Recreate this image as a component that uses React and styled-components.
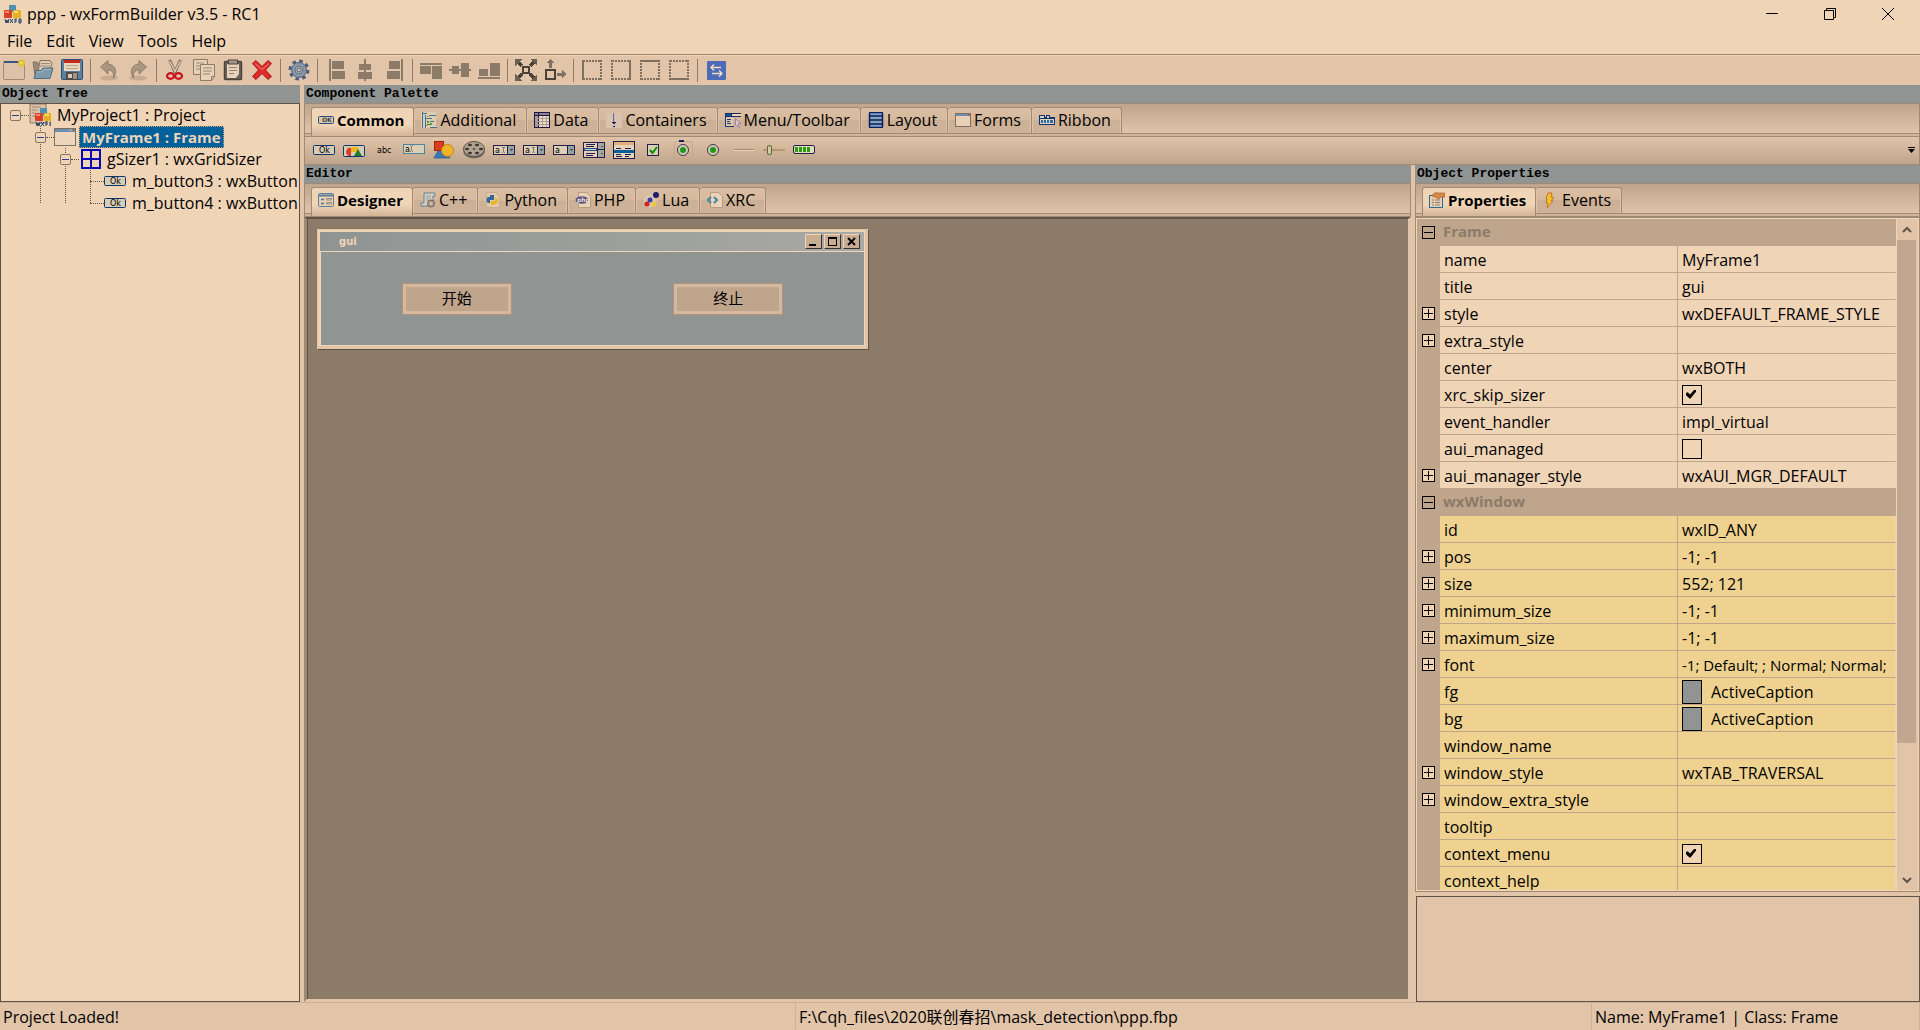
import React, { useState } from "react";
import styled, { createGlobalStyle, css } from "styled-components";

const c = {
  light: "#f0d4b6",
  face: "#e2c4a8",
  shade: "#bea58c",
  line: "#a08a76",
  dark: "#5f5347",
  caption: "#909593",
  canvas: "#8c7b69",
  yellow: "#efd290",
  select: "#00609a",
  glyph: "#8c7b69",
};

const GlobalStyle = createGlobalStyle`
  * { box-sizing: border-box; }
  body {
    margin: 0;
    background: ${c.face};
    color: #000;
    font-family: "Open Sans", "Noto Sans CJK SC", sans-serif;
    font-size: 16px;
    line-height: 22px;
    overflow: hidden;
  }
  button, input { font: inherit; color: inherit; }
  button { border: 0; padding: 0; margin: 0; background: none; display: block; }
  svg { display: block; flex: none; }
`;

/* ---------- shell ---------- */

const Window = styled.div`
  display: flex;
  flex-direction: column;
  height: 100vh;
`;

const TitleBar = styled.header`
  display: flex;
  align-items: center;
  height: 28px;
  padding: 0 3px 0 2px;
  background: ${c.light};
`;

const TitleText = styled.h1`
  flex: 1;
  margin: 0 0 0 5px;
  font-size: 16px;
  font-weight: 400;
`;

const WindowControl = styled.button`
  display: flex;
  align-items: center;
  justify-content: center;
  width: 58px;
  height: 28px;
`;

const MenuBar = styled.nav`
  display: flex;
  height: 26px;
  gap: 14px;
  padding: 0 7px 1px;
  background: ${c.light};
`;

const ToolBar = styled.div`
  display: flex;
  align-items: center;
  gap: 7px;
  height: 31px;
  padding-left: 3px;
  border-top: 1px solid ${c.line};
  box-shadow: inset 0 1px ${c.light};
`;

const Separator = styled.span`
  width: 1px;
  height: 23px;
  background: ${c.canvas};
`;

const Main = styled.main`
  display: grid;
  grid-template-columns: 300px minmax(0, 1fr);
  column-gap: 4px;
  flex: 1;
  min-height: 0;
`;

const Pane = styled.section`
  display: flex;
  flex-direction: column;
  min-width: 0;
  min-height: 0;
`;

const Workspace = styled.div`
  display: grid;
  grid-template-columns: minmax(0, 1fr) 505px;
  column-gap: 4px;
  flex: 1;
  min-height: 0;
`;

const Caption = styled.h2`
  flex: none;
  height: 18px;
  margin: 0;
  padding-left: 2px;
  background: ${c.caption};
  font: 700 13px/18px "Liberation Mono", monospace;
`;

const StatusBar = styled.footer`
  display: grid;
  grid-template-columns: minmax(0, 1fr) minmax(0, 1fr) 328px;
  height: 28px;
  border-top: 1px solid #cbb096;
`;

const StatusCell = styled.span`
  padding: 3px 0 0 3px;
  border-right: 1px solid #cbb096;
`;

/* ---------- object tree ---------- */

const TreeBox = styled.div`
  flex: 1;
  border: 1px solid ${c.dark};
  background: ${c.light};
`;

const TreeList = styled.ul`
  position: relative;
  margin: 0;
  padding: 0 0 0 ${(p) => (p.$root ? 9 : 25)}px;
  list-style: none;
  &::before {
    content: "";
    display: ${(p) => (p.$root ? "none" : "block")};
    position: absolute;
    left: 30px;
    top: 0;
    bottom: 11px;
    border-left: 1px dotted ${c.dark};
  }
`;

const TreeRow = styled.div`
  display: flex;
  align-items: center;
  height: 22px;
`;

const Expander = styled.button`
  position: relative;
  flex: none;
  width: 11px;
  height: 11px;
  border: 1px solid #857565;
  border-radius: 2px;
  background: ${c.light};
  &::before {
    content: "";
    display: block;
    width: 7px;
    height: 1px;
    margin: 0 auto;
    background: #2a3f96;
  }
`;

const LeafGap = styled.span`
  flex: none;
  width: 5px;
`;

const Dots = styled.span`
  flex: none;
  width: ${(p) => (p.$leaf ? 14 : 8)}px;
  border-top: 1px dotted ${c.dark};
`;

const TreeLabel = styled.span`
  margin-left: 3px;
  padding: 0 2px;
  border: 1px solid transparent;
  line-height: 20px;
  white-space: nowrap;
  ${(p) =>
    p.$selected &&
    css`
      border: 1px dotted #e0a070;
      background: ${c.select};
      color: ${c.light};
      font-weight: 700;
      font-size: 15px;
    `}
`;

/* ---------- notebooks ---------- */

const TabStrip = styled.div`
  display: flex;
  flex: none;
  height: 34px;
  padding: 3px 6px 0;
  border: solid ${c.line};
  border-width: 1px 1px 1px 1px;
  background: linear-gradient(
    ${c.shade} 0,
    ${c.face} 29px,
    ${c.line} 29px,
    ${c.line} 30px,
    #d2b598 30px
  );
`;

const Tab = styled.button`
  display: flex;
  align-items: center;
  gap: 3px;
  height: 26px;
  padding: 0 10px 1px 7px;
  border: solid ${c.line};
  border-width: 1px 1px 0 0;
  border-radius: 3px 3px 0 0;
  background: linear-gradient(#dbbfa3 0, #d6b99d 50%, #ccb095 50%, #d0b499 100%);
  box-shadow: inset 1px 1px #dec2a6, inset -1px 0 #dec2a6;
  white-space: nowrap;
  ${(p) =>
    p.$active &&
    css`
      height: 29px;
      padding: 0 9px 4px 6px;
      border-width: 1px 1px 0 1px;
      background: linear-gradient(${c.light} 60%, #d2b598);
      box-shadow: none;
      font-weight: 700;
      font-size: 15px;
    `}
`;

const PaletteBar = styled.div`
  display: flex;
  align-items: center;
  gap: 8px;
  height: 28px;
  padding: 0 4px 1px 8px;
  border: solid ${c.line};
  border-width: 0 1px 1px;
  background: linear-gradient(${c.face}, ${c.shade});
`;

const Overflow = styled.button`
  margin-left: auto;
`;

/* ---------- designer ---------- */

const Canvas = styled.div`
  flex: 1;
  min-height: 0;
  padding: 10px;
  border: solid;
  border-width: 2px 3px 3px 3px;
  border-color: ${c.dark} ${c.face} ${c.face} ${c.line};
  background: ${c.canvas};
  box-shadow: inset 1px 0 ${c.dark};
`;

const FormFrame = styled.div`
  display: flex;
  flex-direction: column;
  padding: 2px 4px 4px 2px;
  border: 1px solid;
  border-color: ${c.face} ${c.dark} ${c.dark} ${c.face};
  background: ${c.light};
  box-shadow: inset -3px -3px ${c.face};
`;

const FormTitle = styled.div`
  display: flex;
  align-items: center;
  gap: 2px;
  height: 19px;
  padding: 0 4px 0 19px;
  background: linear-gradient(90deg, #8f9492, #a9a9a6);
  color: ${c.light};
  font: 700 10px/14px "DejaVu Sans", sans-serif;
`;

const FormName = styled.span`
  flex: 1;
`;

const FormControl = styled.button`
  display: flex;
  align-items: center;
  justify-content: center;
  width: 17px;
  height: 15px;
  border: 1px solid;
  border-color: ${c.light} #3a332c #3a332c ${c.light};
  background: #c9ad92;
`;

const FormBody = styled.div`
  display: grid;
  grid-template-columns: 1fr 1fr;
  place-items: center;
  flex: 1;
  margin: 1px 0 0 1px;
  background: ${c.caption};
`;

const FormButton = styled.button`
  width: 110px;
  height: 32px;
  padding-bottom: 2px;
  border: 1px solid #b0937a;
  background: ${c.shade};
  box-shadow: inset 0 0 0 3px #d6b99d;
  font: 15px/22px "Noto Sans CJK SC", sans-serif;
`;

/* ---------- property grid ---------- */

const GridFrame = styled.div`
  display: flex;
  flex: 1;
  min-height: 0;
  border: solid ${c.line};
  border-width: 1px 1px 1px 1px;
  box-shadow: inset 0 0 0 1px ${c.light};
  padding: 1px 3px 1px 1px;
`;

const GridClip = styled.div`
  flex: 1;
  min-width: 0;
  overflow: hidden;
  border-left: 1px solid ${c.shade};
`;

const GridTable = styled.table`
  width: 100%;
  table-layout: fixed;
  border-spacing: 0;
  background: ${c.shade};
`;

const GutterCol = styled.col`
  width: 22px;
`;
const NameCol = styled.col`
  width: 238px;
`;

const Gutter = styled.td`
  height: 27px;
  padding: 0 0 0 4px;
`;

const Category = styled.th`
  padding: 0 3px 3px;
  color: ${c.canvas};
  font-size: 15px;
  text-align: left;
`;

const cell = css`
  height: 27px;
  padding: 1px 0 0 4px;
  border: solid ${c.shade};
  border-width: 0 1px 1px 0;
  background: ${(p) => (p.$yellow ? c.yellow : c.light)};
  overflow: hidden;
  text-align: left;
  font-weight: 400;
  font-size: ${(p) => (p.$compact ? 15 : 16)}px;
  white-space: nowrap;
`;
const NameCell = styled.th`
  ${cell}
`;
const ValueCell = styled.td`
  ${cell}
  border-right-color: ${c.light};
`;

const ValueLine = styled.span`
  display: flex;
  align-items: center;
  gap: 9px;
`;

const Swatch = styled.span`
  width: 20px;
  height: 24px;
  border: 1px solid #000;
  background: ${c.caption};
`;

const Toggle = styled.button`
  display: flex;
  align-items: center;
  justify-content: center;
  width: 13px;
  height: 13px;
  border: 1px solid #000;
  background: ${(p) => (p.$open ? "transparent" : c.light)};
`;

const Check = styled.input`
  appearance: none;
  display: block;
  width: 20px;
  height: 20px;
  margin: 0;
  border: 1px solid #000;
  background: ${c.light};
  &:checked::after {
    content: "";
    display: block;
    width: 10px;
    height: 9px;
    margin: 4px 3px;
    background: #000;
    clip-path: polygon(0 40%, 18% 30%, 40% 55%, 85% 0, 100% 0, 100% 25%, 45% 100%, 35% 100%, 0 65%);
  }
`;

const ScrollBar = styled.div`
  display: flex;
  flex-direction: column;
  width: 20px;
  border-left: 1px solid ${c.light};
  background: ${c.face};
`;
const ScrollButton = styled.button`
  display: flex;
  align-items: center;
  justify-content: center;
  height: 21px;
`;
const ScrollTrack = styled.div`
  flex: 1;
`;
const ScrollThumb = styled.div`
  height: 80%;
  background: #c1a78f;
`;

const HelpBox = styled.div`
  flex: none;
  height: 106px;
  margin: 4px 0 0 1px;
  border: 1px solid ${c.dark};
`;

/* ---------- icons ---------- */

const Svg = ({ s = 22, children, crisp }) => (
  <svg width={s} height={s} viewBox={`0 0 ${s} ${s}`} fill="none" aria-hidden="true" shapeRendering={crisp ? "crispEdges" : undefined}>
    {children}
  </svg>
);

const Blocks = () => (
  <>
    <rect x="6" y="0" width="7" height="7" rx="1" fill="#4f8fb0" />
    <rect x="1" y="5" width="8" height="8" rx="1" fill="#d8402a" />
    <rect x="10" y="5" width="8" height="8" rx="1" fill="#e8b020" />
    <rect x="2" y="6" width="4" height="2" fill="#ee8a70" />
    <rect x="11" y="6" width="4" height="2" fill="#f8dc70" />
    <path d="M2 14l1 4 1-3 1 3 1-4M7 14l3 4m0-4l-3 4M12 18v-4h2M12 16h2M16 18v-4h2v4zM16 16h2" stroke="#1d3f6e" strokeWidth="1" />
  </>
);
const AppIcon = () => (
  <Svg s={20}>
    <g transform="translate(1 1)">
      <Blocks />
    </g>
  </Svg>
);
const ProjectIcon = () => (
  <Svg>
    <path d="M1 0h16v19H1z" fill="#dcc2a6" stroke="#8c7b69" />
    <path d="M3 3h9M3 6h5M3 9h3M3 12h3" stroke="#a08a76" />
    <g transform="translate(5 4)">
      <Blocks />
    </g>
  </Svg>
);
const FrameIcon = () => (
  <Svg>
    <rect x=".5" y="2.500" width="21" height="17" fill="#eed6bd" stroke="#80705f" />
    <path d="M1 3h20v3H1z" fill="#6f8db0" />
    <path d="M15 4h1M17 4h1" stroke="#f0d4b6" />
    <path d="M19 4h2" stroke="#d8402a" />
  </Svg>
);
const SizerIcon = () => (
  <Svg crisp>
    <path d="M3 2h18v18H3zM12 2v18M3 11h18" stroke="#0707b8" strokeWidth="2" />
  </Svg>
);
const OkIcon = () => (
  <Svg>
    <rect x=".5" y="6.500" width="21" height="9" rx="1" fill="#d8cdb4" stroke="#0b3670" />
    <text x="6" y="14" fontSize="8" fontFamily="DejaVu Sans" fill="#000">Ok</text>
  </Svg>
);
const OkSmall = () => (
  <Svg s={16}>
    <rect x=".5" y="4.500" width="15" height="7" rx="1" fill="#d8c8b0" stroke="#2c4a78" />
    <text x="4" y="10" fontSize="6" fontWeight="700" fontFamily="DejaVu Sans" fill="#444">OK</text>
  </Svg>
);

const NewIcon = () => (
  <Svg>
    <rect x=".5" y="2.500" width="21" height="18" rx="1" fill="#dcc3a8" stroke="#a08a76" />
    <path d="M1 2h20v2H1z" fill="#35587f" />
    <circle cx="18.500" cy="4" r="3.500" fill="#ddc040" />
    <circle cx="18.500" cy="4" r="1.500" fill="#f7e03c" />
  </Svg>
);
const OpenIcon = () => (
  <Svg>
    <path d="M1 3h4l1 2h6v11H3z" fill="#9a8c7a" stroke="#83715f" />
    <path d="M8 1.500h10l2 3-3 9H6z" fill="#e0cdb4" stroke="#83715f" />
    <path d="M9 4.500h9M8 7h10" stroke="#a08a76" />
    <path d="M4 11.500h5l2-2.500h10l-3 10.500H2z" fill="#7f9bab" stroke="#4f6c80" />
    <path d="M5 13h5l2-2.500h7" stroke="#a4b4b8" />
  </Svg>
);
const SaveIcon = () => (
  <Svg>
    <rect x=".5" y=".5" width="21" height="20" rx="1" fill="#5a80a4" stroke="#2a4a70" />
    <path d="M3 1h16v11H3z" fill="#ead6be" />
    <path d="M3 1h16v3H3z" fill="#c8281e" />
    <path d="M5 6.500h12M5 9.500h12" stroke="#b9a68f" />
    <path d="M5 13h12v8H5z" fill="#4c4a48" />
    <path d="M12 14h4v6h-4z" fill="#a09484" />
    <path d="M7 15h4v4H7z" fill="#d8c8b4" />
  </Svg>
);
const UndoShape = () => (
  <>
    <ellipse cx="10" cy="19" rx="9" ry="2.500" fill="#c8ab90" />
    <path d="M1.500 8L9 1.500V5c7 .5 10 7 5.500 14 .5-5-1-8-5.500-8v4z" fill="#a99680" stroke="#83735f" strokeWidth=".8" />
  </>
);
const UndoIcon = () => (
  <Svg>
    <g transform="translate(1 0)">
      <UndoShape />
    </g>
  </Svg>
);
const RedoIcon = () => (
  <Svg>
    <g transform="matrix(-1 0 0 1 21 0)">
      <UndoShape />
    </g>
  </Svg>
);
const CutIcon = () => (
  <Svg>
    <path d="M5.500 1l6 13M16.500 1l-6 13" stroke="#837466" strokeWidth="3" />
    <path d="M5.500 2l6 11M16.500 2l-6 11" stroke="#dccab4" strokeWidth="1.400" />
    <ellipse cx="6.500" cy="17" rx="3.500" ry="2.800" stroke="#c81420" strokeWidth="2.200" />
    <ellipse cx="14.500" cy="17" rx="3.500" ry="2.800" stroke="#c81420" strokeWidth="2.200" />
  </Svg>
);
const CopyIcon = () => (
  <Svg>
    <path d="M.5 .5h14v15H.5z" fill="#e4ceb4" stroke="#8c7b69" />
    <path d="M3 4h8M3 7h4M3 10h4" stroke="#a08a76" />
    <path d="M7.500 5.500h14v12l-3 4h-11z" fill="#e8d2b8" stroke="#8c7b69" />
    <path d="M10 9h9M10 12h9M10 15h7" stroke="#94836f" />
    <path d="M18.500 21v-3.500h3" stroke="#8c7b69" />
  </Svg>
);
const PasteIcon = () => (
  <Svg>
    <rect x="2.500" y="2.500" width="17" height="18" rx="1" fill="#6c6156" stroke="#4c443c" strokeWidth="1.500" />
    <path d="M5 5h12v10l-3 4H5z" fill="#e6d2ba" />
    <rect x="6.500" y="1" width="9" height="4" fill="#a49686" stroke="#4c443c" />
    <path d="M7 8.500h8M7 11.500h8M7 14.500h5" stroke="#94836f" />
  </Svg>
);
const DeleteIcon = () => (
  <Svg>
    <path d="M1.500 4.500L5 1.500l6 6 6-6 3.500 3-6 6.500 6 6.500-3.500 3-6-6-6 6-3.500-3 6-6.500z" fill="#e02a2a" stroke="#a51818" />
    <path d="M4 4.500l7 6 7-6" stroke="#f08a80" />
  </Svg>
);
const GearIcon = () => (
  <Svg>
    <circle cx="11" cy="11" r="9" stroke="#4c5f78" strokeWidth="3" strokeDasharray="3.530 3.530" />
    <circle cx="11" cy="11" r="7.500" fill="#8a98a8" stroke="#4c6482" />
    <circle cx="11" cy="11" r="4" fill="#b4b0ac" stroke="#5d7490" />
    <circle cx="11" cy="11" r="2" fill="#e2c4a8" stroke="#4c6482" />
  </Svg>
);
const glyphIcon = (d) => () => (
  <Svg crisp>
    <path d={d} fill={c.glyph} />
  </Svg>
);
const AlignLeft = glyphIcon("M4 0h2v22H4zM7 2h12v8H7zM7 12h13v8H7z");
const AlignCenterH = glyphIcon("M10 0h2v22h-2zM5 5h12v6H5zM4 13h14v7H4z");
const AlignRight = glyphIcon("M18 0h2v22h-2zM6 2h11v8H6zM4 12h13v8H4z");
const AlignTop = glyphIcon("M0 4h22v2H0zM0 7h11v8H0zM12 7h10v13H12z");
const AlignMiddle = glyphIcon("M0 10h22v2H0zM3 7h7v8H3zM12 4h8v14h-8z");
const AlignBottom = glyphIcon("M0 18h22v2H0zM1 10h9v7H1zM12 4h10v13H12z");
const ExpandIcon = () => (
  <Svg crisp>
    <path d="M8 8h6v6H8z" stroke="#4a4239" strokeWidth="2" />
    <path d="M2 2l5 5M20 2l-5 5M2 20l5-5M20 20l-5-5" stroke="#4a4239" strokeWidth="3" />
    <path d="M0 0h7L0 7zM22 0h-7l7 7zM0 22h7l-7-7zM22 22h-7l7-7z" fill="#6c5f52" />
  </Svg>
);
const StretchIcon = () => (
  <Svg crisp>
    <path d="M2 11h9v9H2z" stroke="#4a4239" strokeWidth="2" />
    <path d="M6 0l4 4H8v5H5V4H2zM22 15l-4 4v-2h-5v-3h5v-3z" fill="#80705f" />
  </Svg>
);
const borderIcon = (solid) => () => (
  <Svg crisp>
    <path d="M2 2h18M2 20h18M2 1v20M20 1v20" stroke="#80705f" strokeWidth="2" strokeDasharray="2 1" />
    <path d={solid} stroke="#80705f" strokeWidth="2" />
  </Svg>
);
const BorderLeft = borderIcon("M2 1v20");
const BorderRight = borderIcon("M20 1v20");
const BorderTop = borderIcon("M1 2h20");
const BorderBottom = borderIcon("M1 20h20");
const SwapIcon = () => (
  <Svg>
    <rect x="2" y="2" width="19" height="19" rx="1" fill="#4c6cba" />
    <path d="M7 8.500h9M9 5.500l-3 3 3 3M7 14.500h9M14 11.500l3 3-3 3" stroke="#f0d8c0" strokeWidth="1.500" />
  </Svg>
);

/* palette tab icons */
const AdditionalIcon = () => (
  <Svg s={16}>
    <path d="M0 0h15v16H0z" fill="#e0ccb0" />
    <path d="M1.500 0v16M4.500 3v13M1 1.500h5M8 3.500h7M5 6.500h6M9 9.500h4M6 12.500h4M9 15.500h7" stroke="#3d7394" />
    <path d="M6 9h2v2H6zM9 11h2v2H9z" fill="#44a424" />
    <path d="M6 4h2v1H6zM5 13h2v1H5z" fill="#c8a020" />
  </Svg>
);
const DataIcon = () => (
  <Svg s={16} crisp>
    <rect x="0" y="0" width="16" height="16" fill="#1e1838" />
    <path d="M1 1h3v2H1zM5 1h10v2H5z" fill="#8e7aa0" />
    <path d="M1 4h3v11H1z" fill="#a89aa8" />
    <path d="M5 4h10v11H5z" fill="#f0dcc0" />
    <path d="M1 6.500h14M1 9.500h14M1 12.500h14M8.500 4v11M12.500 4v11" stroke="#a898a0" />
  </Svg>
);
const ContainersIcon = () => (
  <Svg s={16} crisp>
    <path d="M0 1h7v15H0zM9 1h7v15H9z" fill="#d9c3ae" />
    <path d="M7.500 1v9" stroke="#5470a0" />
    <path d="M6 10h4M7 11h2M7 14h2" stroke="#1c2460" />
  </Svg>
);
const MenuIcon = () => (
  <Svg s={16} crisp>
    <path d="M0 1h16v4H0z" fill="#1f2a5c" />
    <path d="M1 2h5v2H1z" fill="#00609a" />
    <path d="M7 2h9v2H7z" fill="#ecd4ba" />
    <path d="M1 5h7v10H1z" fill="#dcc8b4" />
    <path d="M.5 5v10M2 7.500h4M2 9.500h3M2 11.500h4M1 14.500h8" stroke="#1f3a6c" />
    <path d="M10 6l5 5h-2l1 4-2-1-2-2z" fill="#e0c8c0" stroke="#9a86a8" />
  </Svg>
);
const LayoutIcon = () => (
  <Svg s={16}>
    <rect x="1.500" y=".5" width="13" height="15" rx="1" fill="#8aa2ba" stroke="#071f66" strokeWidth="1.500" />
    <path d="M1 4h14M1 8h14M1 12h14" stroke="#071f66" strokeWidth="1.500" />
  </Svg>
);
const FormsIcon = () => (
  <Svg s={16}>
    <rect x=".5" y="1.500" width="15" height="13" fill="#e8d0b6" stroke="#80705f" />
    <path d="M1 2h14v2H1z" fill="#6f8db0" />
    <path d="M13 3h2" stroke="#d8402a" />
  </Svg>
);
const RibbonIcon = () => (
  <Svg s={16} crisp>
    <path d="M.5 5V3.500h5V5h2V3.500h3V5h5v7.500H.5z" fill="#e0d0bc" stroke="#0b3670" />
    <path d="M1 6.500h14" stroke="#0b3670" />
    <path d="M2 8h2v3H2zM5 8h2v3H5zM8 8h2v3H8zM11 8h3v3h-3z" fill="#2c6ca0" />
  </Svg>
);

/* editor tab icons */
const DesignerIcon = () => (
  <Svg s={16}>
    <rect x=".5" y="1.500" width="15" height="13" rx="1" fill="#e6d0b8" stroke="#5c7c98" />
    <path d="M1 3.500h14" stroke="#5c7c98" strokeWidth="2" />
    <path d="M3 7.500h3M3 11.500h3" stroke="#4c74a0" strokeWidth="1.500" />
    <path d="M8.500 6.500h5v1.500h-5zM8.500 10.500h5v1.500h-5z" stroke="#a08a76" />
  </Svg>
);
const CppIcon = () => (
  <Svg s={16}>
    <path d="M4 1h11v3h-2v10H1v-3h3z" fill="#dcd0bc" stroke="#5c8498" />
    <path d="M6 4h5M6 6h5M6 8h4" stroke="#8ca4ac" />
    <circle cx="11" cy="11.500" r="3.500" fill="#b0a090" stroke="#6c6054" />
    <circle cx="11" cy="11.500" r="1" fill="#ecd4ba" />
  </Svg>
);
const page = <path d="M3.500 .5h8l4 4v11h-12z" fill="#ead2b8" stroke="#b89c80" />;
const PythonIcon = () => (
  <Svg s={16}>
    <path d="M1.500 .5h9l4 4v11h-13z" fill="#e2c8ac" stroke="#c8ac90" />
    <path d="M5 3h4v5H5v3H3c-2-1-2-5 0-6h2z" fill="#33679a" />
    <path d="M9 13H6V9h4V6h1c3 1 3 4 0 6H9z" fill="#e8b820" />
  </Svg>
);
const PhpIcon = () => (
  <Svg s={16}>
    {page}
    <ellipse cx="7" cy="8" rx="6.500" ry="3.800" fill="#5c5480" />
    <text x="2" y="10" fontSize="6" fontWeight="700" fontFamily="DejaVu Sans" fill="#e8dcd0">php</text>
  </Svg>
);
const LuaIcon = () => (
  <Svg s={16}>
    <circle cx="7" cy="9" r="6.500" fill="#dcc4ae" />
    <circle cx="13" cy="3" r="3" fill="#1c1c70" />
    <circle cx="7" cy="8" r="2.500" fill="#3c3ca8" />
    <circle cx="4" cy="12" r="2.500" fill="#d02020" />
    <circle cx="11" cy="12" r="2.500" fill="#ecc840" />
  </Svg>
);
const XrcIcon = () => (
  <Svg s={16}>
    {page}
    <path d="M4 5L1 8l3 3M7 5l3 3-3 3" stroke="#3f86a8" strokeWidth="2" />
  </Svg>
);
const PropertiesIcon = () => (
  <Svg s={16}>
    <rect x=".5" y="3.500" width="13" height="12" fill="#e6d0b8" stroke="#2c6c90" />
    <path d="M3 8h2M6 8h5M3 10.500h2M6 10.500h5M3 13h2M6 13h5" stroke="#8c7b69" />
    <path d="M3 4c1-3 4-4 7-3h6v4h-4l-2 2-2-1z" fill="#d88844" stroke="#9c5c2c" strokeWidth=".6" />
  </Svg>
);
const EventsIcon = () => (
  <Svg s={16}>
    <path d="M5 1h4L8 5h3L8 9h2l-6 7 1-5H3l1-4H3z" fill="#f0c420" stroke="#c0602c" strokeWidth=".8" />
  </Svg>
);

/* palette components */
const BitmapButtonIcon = () => (
  <Svg>
    <rect x=".5" y="6.500" width="21" height="11" rx="1" fill="#d8cdb4" stroke="#0b3670" />
    <path d="M3 14c0-4 2-6 5-5v8H5z" fill="#d8402a" />
    <path d="M8 8h7v5H8z" fill="#ecb820" />
    <path d="M15 10l4 7h-8z" fill="#1c7c2c" />
  </Svg>
);
const LabelIcon = () => (
  <Svg>
    <text x="4" y="14" fontSize="8" fontFamily="DejaVu Sans" fill="#000">abc</text>
  </Svg>
);
const TextIcon = () => (
  <Svg crisp>
    <rect x=".5" y="5.500" width="21" height="9" fill="#dccfb4" stroke="#4a86a0" />
    <text x="2" y="13" fontSize="8" fontFamily="DejaVu Sans" fill="#000">a</text>
    <path d="M8.500 7v5M7 6.500h1M9 6.500h1M7 12.500h1M9 12.500h1" stroke="#8c7b69" />
  </Svg>
);
const BitmapIcon = () => (
  <Svg>
    <path d="M7 8L1 19h16l-6-11z" fill="#3a78b4" stroke="#1d4f80" strokeWidth=".6" />
    <rect x="1.500" y="2.500" width="9" height="9" fill="#dc3c20" stroke="#a0200c" />
    <circle cx="14.500" cy="11.500" r="6" fill="#f0b428" stroke="#c08414" />
  </Svg>
);
const ReelIcon = () => (
  <Svg>
    <path d="M.5 9v5c3 7 18 7 21 0V9z" fill="#70665a" />
    <ellipse cx="11" cy="10" rx="10.500" ry="7.500" fill="#b0a290" stroke="#5c5248" />
    <ellipse cx="7" cy="6" rx="2" ry="1.200" fill="#3c342c" />
    <ellipse cx="14" cy="6" rx="2" ry="1.200" fill="#3c342c" />
    <ellipse cx="4" cy="10" rx="2" ry="1.200" fill="#3c342c" />
    <ellipse cx="18" cy="10" rx="2" ry="1.200" fill="#3c342c" />
    <ellipse cx="7" cy="14" rx="2" ry="1.200" fill="#3c342c" />
    <ellipse cx="14" cy="14" rx="2" ry="1.200" fill="#3c342c" />
    <circle cx="11" cy="10" r="1" fill="#3c342c" />
  </Svg>
);
const comboIcon = (caret) => () => (
  <Svg crisp>
    <rect x=".5" y="6.500" width="21" height="9" fill="#dccfb4" stroke="#241c4c" />
    <path d="M15 7h6v8h-6z" fill="#94a4a4" />
    <path d="M14.500 7v8" stroke="#241c4c" />
    <path d="M16 10h4l-2 2z" fill="#544c5c" />
    <text x="2" y="14" fontSize="8" fontFamily="DejaVu Sans" fill="#000">a</text>
    {caret && <path d="M10.500 8v5M9 8.500h1M11 8.500h1M9 13.500h1M11 13.500h1" stroke="#8c7b69" />}
  </Svg>
);
const ComboIcon = comboIcon(true);
const BitmapComboIcon = comboIcon(true);
const ChoiceIcon = comboIcon(false);
const ListBoxIcon = () => (
  <Svg crisp>
    <rect x=".5" y="3.500" width="21" height="15" fill="#e4d0b8" stroke="#241c4c" />
    <path d="M15 4h6v14h-6z" fill="#a4a8a0" />
    <path d="M14.500 4v14M15 10.500h6" stroke="#241c4c" />
    <path d="M1 9h13v3H1z" fill="#28507c" />
    <path d="M3 5.500h9M3 7.500h8M3 14.500h9M3 16.500h7" stroke="#241c4c" />
    <path d="M17 8h3l-1-2zM17 14h3l-1 2z" fill="#544c5c" />
    <path d="M2 10.500h11" stroke="#c8d0d0" />
  </Svg>
);
const ListCtrlIcon = () => (
  <Svg crisp>
    <rect x=".5" y="2.500" width="21" height="17" fill="#e8d4b8" stroke="#241c4c" />
    <path d="M1 3h20v3H1z" fill="#dcb078" />
    <path d="M3 9.500h5M12 9.500h6M3 15.500h5M12 15.500h6M3 17.500h6M12 17.500h4" stroke="#241c4c" />
    <path d="M1 11h20v3H1z" fill="#00609a" />
  </Svg>
);
const CheckIcon = () => (
  <Svg>
    <rect x="4.500" y="5.500" width="11" height="11" fill="#d8d0b0" stroke="#241c4c" />
    <path d="M7 11l2.500 3L14 8" stroke="#0a8a0a" strokeWidth="2" />
  </Svg>
);
const RadioDot = () => (
  <>
    <circle cx="10" cy="11" r="5.500" fill="#d8ccb4" stroke="#3c3450" />
    <circle cx="10" cy="11" r="3" fill="#1c9a1c" />
  </>
);
const RadioBoxIcon = () => (
  <Svg>
    <rect x="1.500" y="2.500" width="18" height="17" rx="2" stroke="#c8a888" />
    <path d="M6 2h5" stroke="#12205c" strokeWidth="2" />
    <RadioDot />
  </Svg>
);
const RadioIcon = () => (
  <Svg>
    <RadioDot />
  </Svg>
);
const LineIcon = () => (
  <Svg crisp>
    <path d="M1 10.500h20" stroke="#a08a76" />
    <path d="M1 11.500h20" stroke="#f0d4b6" />
  </Svg>
);
const SliderIcon = () => (
  <Svg>
    <path d="M0 11h22" stroke="#b49870" strokeWidth="2" />
    <rect x="4.500" y="6.500" width="4" height="9" rx="1" fill="#d8c8a8" stroke="#6c5c3c" />
    <path d="M5 7h3M5 15h3" stroke="#4ca42c" />
  </Svg>
);
const GaugeIcon = () => (
  <Svg>
    <rect x=".5" y="6.500" width="21" height="8" rx="1.500" fill="#e4dcc0" stroke="#241c4c" />
    <path d="M2 8h3v5H2zM6 8h3v5H6zM10 8h3v5h-3zM14 8h3v5h-3z" fill="#2c9c14" />
  </Svg>
);

/* ---------- data ---------- */

const menus = ["File", "Edit", "View", "Tools", "Help"];

const tools = [
  [["New", NewIcon], ["Open", OpenIcon], ["Save", SaveIcon]],
  [["Undo", UndoIcon], ["Redo", RedoIcon]],
  [["Cut", CutIcon], ["Copy", CopyIcon], ["Paste", PasteIcon], ["Delete", DeleteIcon]],
  [["Generate code", GearIcon]],
  [["Align left", AlignLeft], ["Center horizontally", AlignCenterH], ["Align right", AlignRight]],
  [["Align top", AlignTop], ["Center vertically", AlignMiddle], ["Align bottom", AlignBottom]],
  [["Expand", ExpandIcon], ["Stretch", StretchIcon]],
  [["Left border", BorderLeft], ["Right border", BorderRight], ["Top border", BorderTop], ["Bottom border", BorderBottom]],
  [["Swap", SwapIcon]],
];

const paletteTabs = [
  ["Common", OkSmall],
  ["Additional", AdditionalIcon],
  ["Data", DataIcon],
  ["Containers", ContainersIcon],
  ["Menu/Toolbar", MenuIcon],
  ["Layout", LayoutIcon],
  ["Forms", FormsIcon],
  ["Ribbon", RibbonIcon],
];

const editorTabs = [
  ["Designer", DesignerIcon],
  ["C++", CppIcon],
  ["Python", PythonIcon],
  ["PHP", PhpIcon],
  ["Lua", LuaIcon],
  ["XRC", XrcIcon],
];

const propertyTabs = [
  ["Properties", PropertiesIcon],
  ["Events", EventsIcon],
];

const components = [
  ["Button", OkIcon],
  ["Bitmap button", BitmapButtonIcon],
  ["Static text", LabelIcon],
  ["Text control", TextIcon],
  ["Static bitmap", BitmapIcon],
  ["Animation", ReelIcon],
  ["Combo box", ComboIcon],
  ["Bitmap combo box", BitmapComboIcon],
  ["Choice", ChoiceIcon],
  ["List box", ListBoxIcon],
  ["List control", ListCtrlIcon],
  ["Check box", CheckIcon],
  ["Radio box", RadioBoxIcon],
  ["Radio button", RadioIcon],
  ["Static line", LineIcon],
  ["Slider", SliderIcon],
  ["Gauge", GaugeIcon],
];

const tree = {
  label: "MyProject1 : Project",
  icon: ProjectIcon,
  children: [
    {
      label: "MyFrame1 : Frame",
      icon: FrameIcon,
      selected: true,
      children: [
        {
          label: "gSizer1 : wxGridSizer",
          icon: SizerIcon,
          children: [
            { label: "m_button3 : wxButton", icon: OkIcon },
            { label: "m_button4 : wxButton", icon: OkIcon },
          ],
        },
      ],
    },
  ],
};

const form = { title: "gui", width: 552, height: 121, buttons: ["开始", "终止"] };

const properties = [
  {
    name: "Frame",
    rows: [
      { name: "name", value: "MyFrame1" },
      { name: "title", value: "gui" },
      { name: "style", value: "wxDEFAULT_FRAME_STYLE", expandable: true },
      { name: "extra_style", expandable: true },
      { name: "center", value: "wxBOTH" },
      { name: "xrc_skip_sizer", check: true },
      { name: "event_handler", value: "impl_virtual" },
      { name: "aui_managed", check: false },
      { name: "aui_manager_style", value: "wxAUI_MGR_DEFAULT", expandable: true },
    ],
  },
  {
    name: "wxWindow",
    yellow: true,
    rows: [
      { name: "id", value: "wxID_ANY" },
      { name: "pos", value: "-1; -1", expandable: true },
      { name: "size", value: "552; 121", expandable: true },
      { name: "minimum_size", value: "-1; -1", expandable: true },
      { name: "maximum_size", value: "-1; -1", expandable: true },
      { name: "font", value: "-1; Default; ; Normal; Normal;", expandable: true, compact: true },
      { name: "fg", value: "ActiveCaption", swatch: true },
      { name: "bg", value: "ActiveCaption", swatch: true },
      { name: "window_name" },
      { name: "window_style", value: "wxTAB_TRAVERSAL", expandable: true },
      { name: "window_extra_style", expandable: true },
      { name: "tooltip" },
      { name: "context_menu", check: true },
      { name: "context_help" },
    ],
  },
];

/* ---------- parts ---------- */

function Tabs({ items, label }) {
  const [active, setActive] = useState(0);
  return (
    <TabStrip role="tablist" aria-label={label}>
      {items.map(([name, Icon], i) => (
        <Tab key={name} role="tab" aria-selected={i === active} $active={i === active} onClick={() => setActive(i)}>
          <Icon />
          {name}
        </Tab>
      ))}
    </TabStrip>
  );
}

function TreeNode({ node }) {
  const Icon = node.icon;
  return (
    <li>
      <TreeRow>
        {node.children ? <Expander aria-label={`Collapse ${node.label}`} /> : <LeafGap />}
        <Dots $leaf={!node.children} />
        <Icon />
        <TreeLabel $selected={node.selected}>{node.label}</TreeLabel>
      </TreeRow>
      {node.children && (
        <TreeList>
          {node.children.map((child) => (
            <TreeNode key={child.label} node={child} />
          ))}
        </TreeList>
      )}
    </li>
  );
}

function ExpandToggle({ open, name }) {
  return (
    <Toggle $open={open} aria-label={`${open ? "Collapse" : "Expand"} ${name}`}>
      <svg width="9" height="9" viewBox="0 0 9 9" shapeRendering="crispEdges" aria-hidden="true">
        <path d={open ? "M0 4h9v1H0z" : "M0 4h9v1H0zM4 0h1v9H4z"} fill="#000" />
      </svg>
    </Toggle>
  );
}

function PropertyRow({ row, yellow }) {
  return (
    <tr>
      <Gutter>{row.expandable && <ExpandToggle name={row.name} />}</Gutter>
      <NameCell scope="row" $yellow={yellow}>
        {row.check === undefined ? row.name : <label htmlFor={row.name}>{row.name}</label>}
      </NameCell>
      <ValueCell $yellow={yellow} $compact={row.compact}>
        {row.check !== undefined ? (
          <Check type="checkbox" id={row.name} defaultChecked={row.check} />
        ) : row.swatch ? (
          <ValueLine>
            <Swatch />
            {row.value}
          </ValueLine>
        ) : (
          row.value
        )}
      </ValueCell>
    </tr>
  );
}

function PropertyGrid() {
  return (
    <GridFrame>
      <GridClip>
        <GridTable>
          <colgroup>
            <GutterCol />
            <NameCol />
            <col />
          </colgroup>
          {properties.map((group) => (
            <tbody key={group.name}>
              <tr>
                <Gutter>
                  <ExpandToggle open name={group.name} />
                </Gutter>
                <Category colSpan={2}>{group.name}</Category>
              </tr>
              {group.rows.map((row) => (
                <PropertyRow key={row.name} row={row} yellow={group.yellow} />
              ))}
            </tbody>
          ))}
        </GridTable>
      </GridClip>
      <ScrollBar>
        <ScrollButton aria-label="Scroll up">
          <svg width="10" height="8" viewBox="0 0 10 8" fill="none" aria-hidden="true">
            <path d="M1 6l4-4 4 4" stroke="#5f5347" strokeWidth="2" />
          </svg>
        </ScrollButton>
        <ScrollTrack>
          <ScrollThumb />
        </ScrollTrack>
        <ScrollButton aria-label="Scroll down">
          <svg width="10" height="8" viewBox="0 0 10 8" fill="none" aria-hidden="true">
            <path d="M1 2l4 4 4-4" stroke="#5f5347" strokeWidth="2" />
          </svg>
        </ScrollButton>
      </ScrollBar>
    </GridFrame>
  );
}

function FormPreview() {
  return (
    <FormFrame style={{ width: form.width, height: form.height }}>
      <FormTitle>
        <FormName>{form.title}</FormName>
        <FormControl aria-label="Minimize form">
          <svg width="11" height="9" viewBox="0 0 11 9" aria-hidden="true">
            <path d="M1 7h7v2H1z" fill="#000" />
          </svg>
        </FormControl>
        <FormControl aria-label="Maximize form">
          <svg width="9" height="9" viewBox="0 0 9 9" aria-hidden="true">
            <path d="M0 0h9v9H0zM1 2v6h7V2z" fill="#000" fillRule="evenodd" />
          </svg>
        </FormControl>
        <FormControl aria-label="Close form">
          <svg width="9" height="9" viewBox="0 0 9 9" aria-hidden="true">
            <path d="M1 1l7 7M8 1L1 8" stroke="#000" strokeWidth="2" />
          </svg>
        </FormControl>
      </FormTitle>
      <FormBody>
        {form.buttons.map((b) => (
          <FormButton key={b}>{b}</FormButton>
        ))}
      </FormBody>
    </FormFrame>
  );
}

export default function App() {
  return (
    <Window>
      <GlobalStyle />
      <TitleBar>
        <AppIcon />
        <TitleText>ppp - wxFormBuilder v3.5 - RC1</TitleText>
        <WindowControl aria-label="Minimize">
          <svg width="12" height="12" viewBox="0 0 12 12" aria-hidden="true">
            <path d="M0 5h12v1H0z" fill="#000" />
          </svg>
        </WindowControl>
        <WindowControl aria-label="Restore">
          <svg width="12" height="12" viewBox="0 0 12 12" fill="none" stroke="#000" aria-hidden="true">
            <path d="M.5 2.500h9v9h-9zM2.500 2.500v-2h9v9h-2" />
          </svg>
        </WindowControl>
        <WindowControl aria-label="Close">
          <svg width="12" height="12" viewBox="0 0 12 12" stroke="#000" aria-hidden="true">
            <path d="M0 0l12 12M12 0L0 12" />
          </svg>
        </WindowControl>
      </TitleBar>
      <MenuBar>
        {menus.map((m) => (
          <button key={m}>{m}</button>
        ))}
      </MenuBar>
      <ToolBar role="toolbar">
        {tools.map((group, i) => (
          <React.Fragment key={i}>
            {i > 0 && <Separator />}
            {group.map(([name, Icon]) => (
              <button key={name} aria-label={name}>
                <Icon />
              </button>
            ))}
          </React.Fragment>
        ))}
      </ToolBar>
      <Main>
        <Pane>
          <Caption>Object Tree</Caption>
          <TreeBox>
            <TreeList $root>
              <TreeNode node={tree} />
            </TreeList>
          </TreeBox>
        </Pane>
        <Pane>
          <Caption>Component Palette</Caption>
          <Tabs items={paletteTabs} label="Component groups" />
          <PaletteBar>
            {components.map(([name, Icon]) => (
              <button key={name} aria-label={name}>
                <Icon />
              </button>
            ))}
            <Overflow aria-label="More components">
              <svg width="7" height="6" viewBox="0 0 7 6" aria-hidden="true">
                <path d="M0 0h7v1H0zM0 2h7L3.500 6z" fill="#000" />
              </svg>
            </Overflow>
          </PaletteBar>
          <Workspace>
            <Pane>
              <Caption>Editor</Caption>
              <Tabs items={editorTabs} label="Editor views" />
              <Canvas>
                <FormPreview />
              </Canvas>
            </Pane>
            <Pane>
              <Caption>Object Properties</Caption>
              <Tabs items={propertyTabs} label="Object details" />
              <PropertyGrid />
              <HelpBox />
            </Pane>
          </Workspace>
        </Pane>
      </Main>
      <StatusBar>
        <StatusCell>Project Loaded!</StatusCell>
        <StatusCell>F:\Cqh_files\2020联创春招\mask_detection\ppp.fbp</StatusCell>
        <StatusCell>Name: MyFrame1 | Class: Frame</StatusCell>
      </StatusBar>
    </Window>
  );
}
